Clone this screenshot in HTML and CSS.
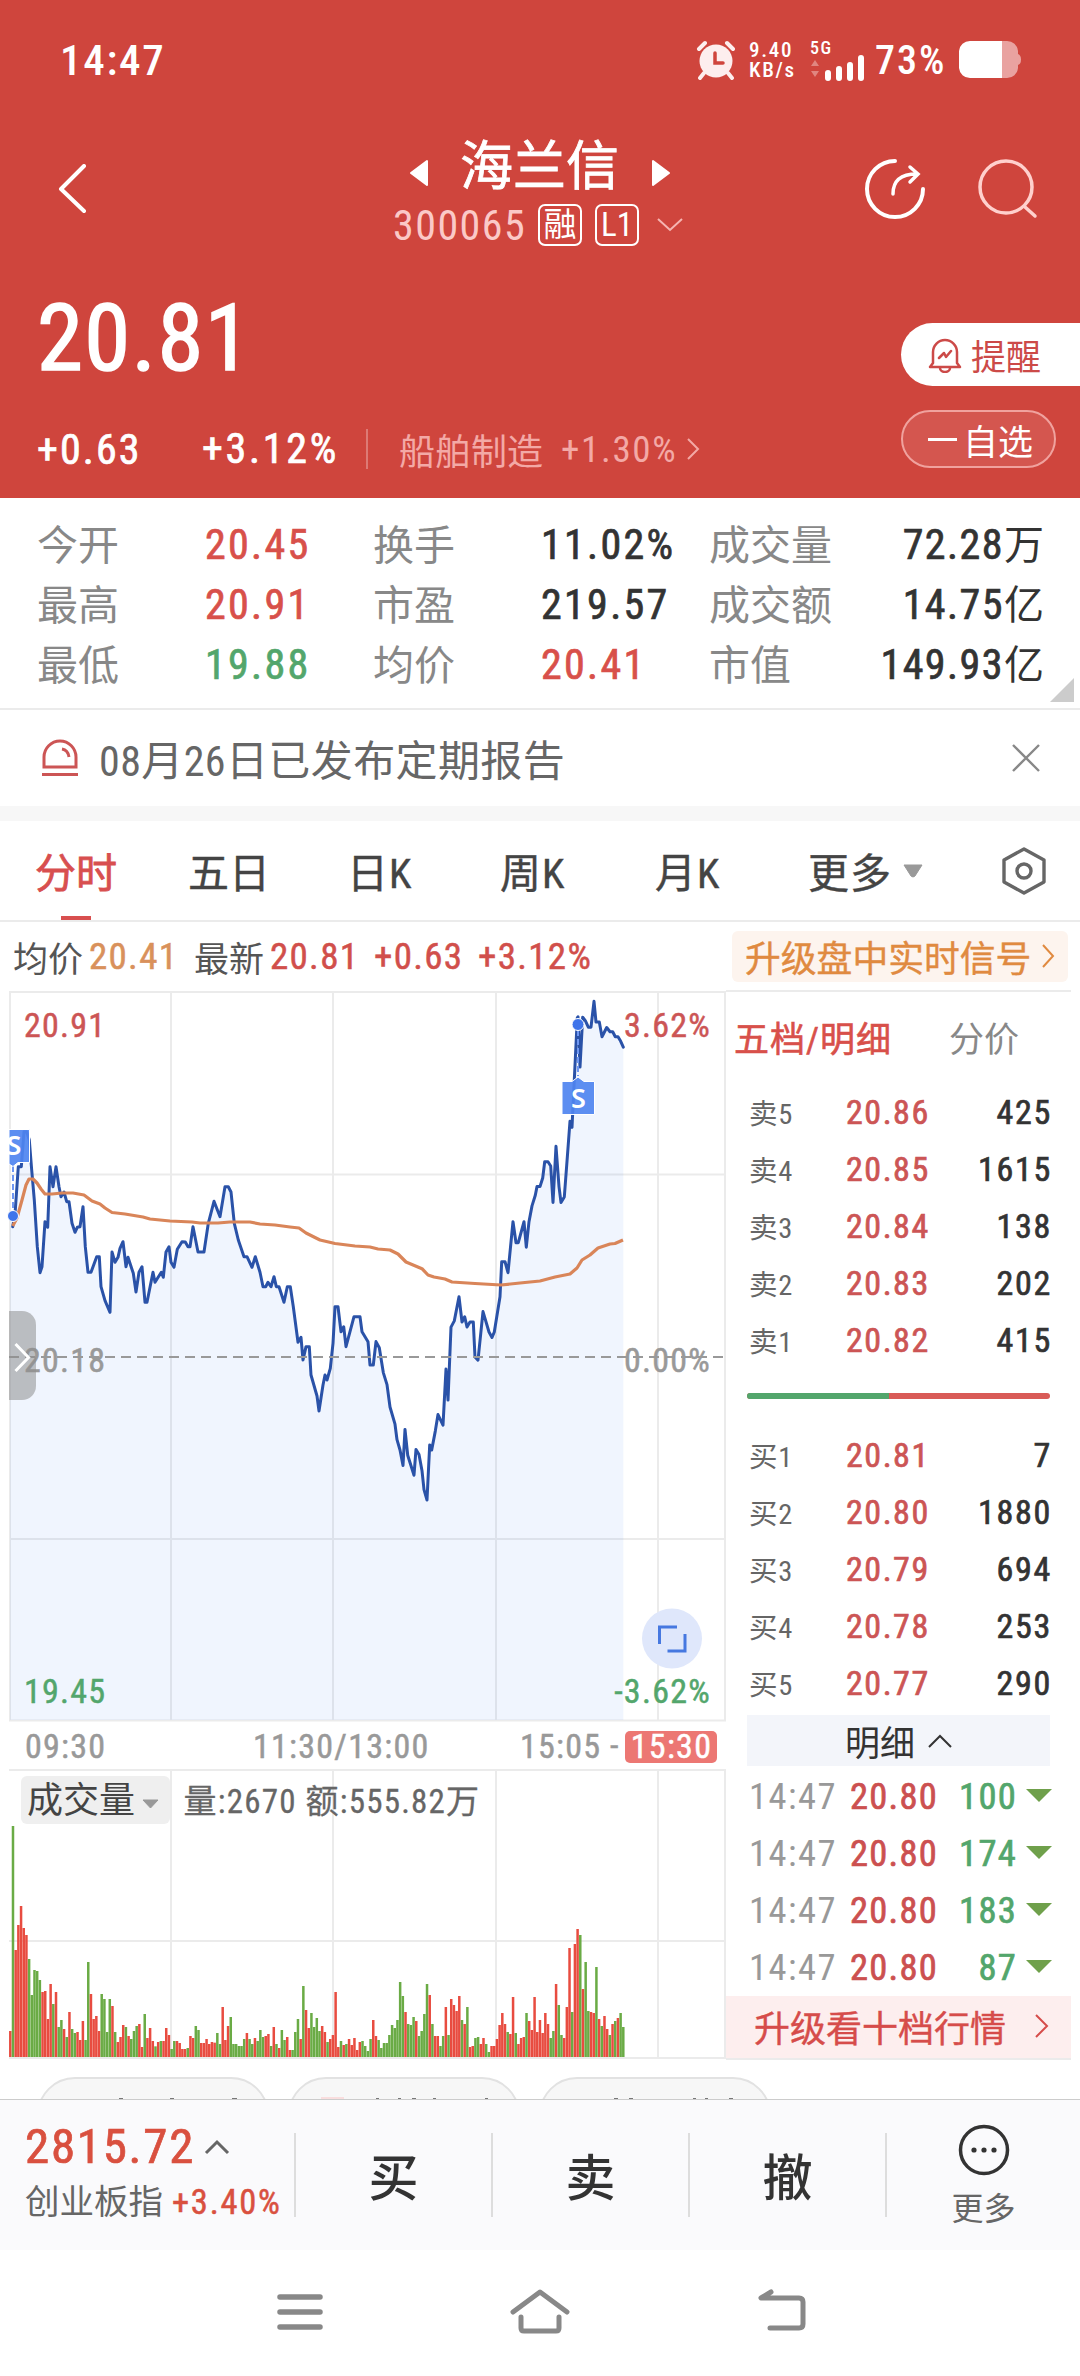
FILE: index.html
```
<!DOCTYPE html>
<html lang="zh-CN">
<head>
<meta charset="utf-8">
<title>海兰信 300065</title>
<link rel="stylesheet" href="styles.css">
</head>
<body>
<header class="hero">
  <div class="status">
    <span class="clock">14:47</span>
    <svg class="alarm" width="40" height="40" viewBox="0 0 40 40" fill="none" stroke="#fdeeee" stroke-linecap="round"><circle cx="20" cy="21" r="16.5" fill="#fdeeee" stroke="none"/><path d="M3 9l6-6M37 9l-6-6M8 33l-4 5M32 33l4 5" stroke-width="4"/><path d="M19 13v10h8" stroke="#cf453d" stroke-width="3.5"/></svg>
    <span class="speed">9.40<br>KB/s</span>
    <span class="signal"><span class="net">5G</span><svg width="56" height="28" viewBox="0 0 56 28"><path d="M1 12l4-6 4 6zM1 17l4 6 4-6z" fill="#e08680"/><path d="M18 24v-5M29 24v-9M40 24v-13M51 24V4" stroke="#fff" stroke-width="6" stroke-linecap="round"/></svg></span>
    <span class="percent">73%</span>
    <svg class="battery" width="64" height="38" viewBox="0 0 64 38"><path d="M11 0h37a11 11 0 0 1 11 10v3q3 1 3 5.500t-3 5.500v3a11 11 0 0 1-11 10h-37z" fill="#e9a2a0"/><path d="M43 0v37H11a11 11 0 0 1-11-10V10A11 11 0 0 1 11 0z" fill="#fff"/></svg>
  </div>
  <div class="titlebar">
    <svg class="back" width="30" height="50" viewBox="0 0 30 50"><path d="M27 2L4 25l23 22" fill="none" stroke="#fff" stroke-width="4" stroke-linecap="round" stroke-linejoin="round"/></svg>
    <div class="stock">
      <div class="name"><svg width="18" height="28" viewBox="0 0 18 28"><path d="M17 2v24L1 14z" fill="#fff" stroke="#fff" stroke-width="2" stroke-linejoin="round"/></svg><h1>海兰信</h1><svg width="18" height="28" viewBox="0 0 18 28"><path d="M1 2v24l16-12z" fill="#fff" stroke="#fff" stroke-width="2" stroke-linejoin="round"/></svg></div>
      <div class="code"><span class="num">300065</span><span class="tag">融</span><span class="tag l1">L1</span><svg width="26" height="16" viewBox="0 0 26 16"><path d="M1 2l12 11L25 2" fill="none" stroke="#f6b5b2" stroke-width="2"/></svg></div>
    </div>
    <svg class="share" width="62" height="62" viewBox="0 0 62 62" fill="none" stroke="#fff" stroke-width="4" stroke-linecap="round"><path d="M31 3a28 28 0 1 0 28 28"/><path d="M29 36c0-13 7-20 24-20M46 9l8 7-8 8" stroke-width="3.500"/></svg>
    <svg class="search" width="62" height="62" viewBox="0 0 62 62" fill="none" stroke="#ffd0cd" stroke-width="3.500" stroke-linecap="round"><circle cx="29" cy="29" r="26"/><path d="M48 49l10 9"/></svg>
  </div>
  <div class="price">
    <div class="last">20.81</div>
    <div class="change"><b class="diff">+0.63</b><b class="pct">+3.12%</b><span class="industry">船舶制造</span><span class="indpct">+1.30%</span><svg width="13" height="24" viewBox="0 0 13 24"><path d="M1 2l10 10L1 22" fill="none" stroke="#f3a9a6" stroke-width="2"/></svg></div>
  </div>
  <div class="actions">
    <a class="remind"><svg width="34" height="36" viewBox="0 0 34 36" fill="none" stroke="#cc4a48" stroke-width="2.500" stroke-linejoin="round" stroke-linecap="round"><path d="M5 26V15a12 12 0 0 1 24 0v11l3 4H2z"/><path d="M12 31a5 4 0 0 0 10 0M11 21l5-5 2 4 5-6"/></svg>提醒</a>
    <a class="watch"><i></i>自选</a>
  </div>
</header>

<section class="stats">
  <span>今开</span><b class="up">20.45</b><span>换手</span><b>11.02%</b><span>成交量</span><b>72.28<small>万</small></b>
  <span>最高</span><b class="up">20.91</b><span>市盈</span><b>219.57</b><span>成交额</span><b>14.75<small>亿</small></b>
  <span>最低</span><b class="down">19.88</b><span>均价</span><b class="up">20.41</b><span>市值</span><b>149.93<small>亿</small></b>
  <svg class="corner" width="24" height="24" viewBox="0 0 24 24"><path d="M24 0v24H0z" fill="#ccc"/></svg>
</section>

<section class="notice">
  <svg width="36" height="38" viewBox="0 0 36 38" fill="none" stroke="#cc5555" stroke-width="3"><path d="M2 28V18a16 16 0 0 1 32 0v10zM0 35.500h36M20 10q6 1 7 8"/></svg>
  <span>08月26日已发布定期报告</span>
  <svg width="28" height="28" viewBox="0 0 28 28"><path d="M1 1l26 26M27 1L1 27" stroke="#888" stroke-width="2.400"/></svg>
</section>

<nav class="tabs">
  <a class="on">分时</a><a>五日</a><a>日K</a><a>周K</a><a>月K</a><a>更多</a>
  <svg class="caret" width="22" height="14" viewBox="0 0 22 14"><path d="M2 1h18l-7 11q-2 2-4 0z" fill="#999" stroke="#999" stroke-linejoin="round"/></svg>
  <svg class="gear" width="46" height="50" viewBox="0 0 46 50" fill="none" stroke="#666" stroke-width="3.400" stroke-linejoin="round"><path d="M23 3l20 11v22L23 47 3 36V14z"/><circle cx="23" cy="25" r="7"/></svg>
</nav>

<div class="summary">
  <span>均价</span><b class="avg">20.41</b><span>最新</span><b>20.81</b><b>+0.63</b><b>+3.12%</b>
  <a class="upgrade">升级盘中实时信号<svg width="14" height="24" viewBox="0 0 14 24"><path d="M2 1l10 11L2 23" fill="none" stroke="#e08a40" stroke-width="2"/></svg></a>
</div>

<main class="board">
  <svg class="chart" width="726" height="1070" viewBox="0 990 726 1070">
    <g class="grid">
      <path d="M9 992H726M9 1174.500H726M9 1539H726M9 1720.500H726M9 1770H726M9 1941H726M9 2058H726"/>
      <path d="M10 991V1721M171 991V1721M333 991V1721M496 991V1721M658 991V1721M725 991V1721M171 1770V2058M333 1770V2058M496 1770V2058M658 1770V2058M725 1770V2058"/>
    </g>
    <path id="area" class="area"/>
    <polyline id="price" class="line" points="12.7,1226.7 15.3,1210 18.3,1166.7 21.3,1166.7 24,1131.7 26.700,1131.7 29.3,1140 31.7,1170 34.3,1200 37.3,1246.7 40,1272.7 42,1266.7 45,1221.7 47.7,1227.3 50,1166.7 53,1186.7 56,1166.7 59,1186.7 61,1196.7 64,1192 66.7,1201.7 69,1201.7 72,1223.3 75,1232.3 77.3,1227.3 80,1226.7 83,1206.7 85.3,1246.7 88,1272.3 91,1272.3 96.7,1256.7 99.3,1256.7 101,1286.7 105,1300.7 110,1312.3 112,1252 115,1262.3 118,1257.3 120,1248.3 123,1241.7 126,1266.7 128,1257.3 133.3,1273.3 136,1292 139,1272.3 142,1266.7 145,1302.3 147,1302.3 153,1272.3 155,1282.3 161.3,1272.3 163.3,1277.3 166,1252 169,1246.7 171,1262.3 174,1267.3 177.3,1249.3 182,1241.7 185.3,1242 188,1246.7 190,1246.7 193,1226.7 198,1252 204,1252 208.3,1223.3 214,1201.3 220,1216.7 225,1186.7 228.3,1186.7 231,1192 234.3,1223.3 238.3,1240 244,1256.7 247,1256.7 252,1267.3 255.3,1256.7 260,1272.3 263,1286.7 265.7,1286.7 268,1282.3 271,1286.7 274,1276.7 276.3,1286.7 279,1286.7 284,1302.3 287.3,1286.7 290.3,1286.7 293.3,1306.7 298,1342.3 301,1337.3 303,1360 306,1346.7 309.3,1346.7 311,1375 317,1396 319,1411 323,1385 325,1375 327,1380 330.3,1368.3 333,1343.3 335,1306.7 338,1306.7 341,1331.7 343.7,1326.7 346,1346.7 354,1316.7 360,1316.7 362,1331.7 368,1341.7 370,1365 373.3,1365 376,1341.6 379.3,1347.8 383.3,1372.6 387,1384.6 390,1407 395,1424.2 397,1439.7 400,1450 403,1465.5 405,1429.4 407.7,1455.2 414,1475.2 416,1449.4 419,1454.5 422,1470.7 424,1489.6 427,1500 429.7,1444.9 431.7,1450 435.3,1431.1 438,1414.6 443,1425.2 446,1369.1 448,1400.1 451,1327.1 454.3,1320.9 459,1296.8 462,1322 464.7,1316.8 467,1327 470,1322 473.3,1322 475,1357 478,1360.2 483,1311.6 489,1332 492,1337.4 494.3,1332 500,1296.8 501.7,1261.7 505,1261.7 508,1272.7 513,1221.7 516,1242.7 518.3,1242.7 524,1221.7 526.3,1247.2 529,1221.7 532,1205.9 535.3,1195.2 537,1186.6 540,1186.6 542.7,1178 544.7,1161.8 548,1161.8 550.7,1166 553,1202.5 556,1146.3 559,1186.6 561,1202.5 564.3,1197 567.3,1157.3 570,1121.2 572,1127.4 574.3,1079.9 577.3,1017.9 578,1016.8 580,1067.1 582.7,1017.2 585.3,1020.6 588.3,1027.2 591,1027.2 594,1001.3 596,1022 599.3,1022 602,1036.8 606.7,1027.5 610,1031.7 612.7,1031.7 615.3,1036.8 618,1036.8 620.7,1041.3 623.3,1047.1"/>
    <polyline class="mean" points="12.7,1226 17,1218 22,1200 26,1185 29,1179 33,1179 37,1183 41,1189 45,1194 52,1194 62,1193 73,1193 84,1195 92,1201 100,1204 105,1208 112,1212.5 125,1214 143,1217 150,1219 170,1221 192,1222 200,1223 218,1223 230,1222 250,1222 260,1224 275,1225 290,1227 299,1228 306,1233 320,1240 335,1243.5 355,1246 370,1247 378,1249 390,1250 398,1254 406,1262 422,1268.7 428,1275 434,1277 445,1279 452,1282 475,1283.5 501,1285 520,1283 540,1281 555,1277 570,1274 577,1268 582,1260 590,1255 598,1248 610,1244 615,1243.5 623,1240"/>
    <g class="marker">
      <path d="M13 1166V1214" class="lead"/><circle cx="13" cy="1216" r="5.500"/>
      <path d="M9 1129.500H29.500V1162.500H18L13 1166.500L9 1164Z" class="flag"/><text x="14" y="1155" text-anchor="middle">S</text>
      <path d="M578 1030V1076" class="lead"/><circle cx="578" cy="1024.500" r="6"/>
      <path d="M562 1081.500H572L578 1077L584 1081.500H594.500V1114.500H562Z" class="flag"/><text x="578.500" y="1108" text-anchor="middle">S</text>
      <path d="M0 1120h9v60H0z" fill="#fff" stroke="none"/>
    </g>
    <path d="M9 1357H726" class="zero"/>
    <text x="24" y="1037" class="up">20.91</text><text x="711" y="1037" class="up end">3.62%</text>
    <text x="24" y="1372">20.18</text><text x="711" y="1372" class="end">0.00%</text>
    <circle cx="672" cy="1638.500" r="30" fill="#dfe7fb"/><path d="M659.500 1644V1627H677M667.500 1651H685V1634" fill="none" stroke="#4678e0" stroke-width="3"/>
    <text x="24" y="1703" class="down">19.45</text><text x="711" y="1703" class="down end">-3.62%</text>
    <path d="M9 1311h13a14 14 0 0 1 14 14v61a14 14 0 0 1-14 14H9z" fill="#8e8e8e" opacity=".55"/><path d="M15.500 1344L28.500 1357.500 15.500 1371" fill="none" stroke="#fff" stroke-width="3"/>
    <text x="25" y="1758">09:30</text><text x="253" y="1758">11:30/13:00</text><text x="520" y="1758">15:05</text><text x="610" y="1757">-</text>
    <rect x="625" y="1731" width="92" height="32" rx="5" fill="#ec7773"/><text x="671.500" y="1758" class="mid">15:30</text>
    <rect x="21" y="1776" width="149" height="48" rx="6" fill="#efefef"/><text x="27" y="1813" class="vol">成交量</text><path d="M143 1800h15l-7.500 8z" fill="#999" stroke="#999" stroke-linejoin="round"/>
    <text x="183.500" y="1813" class="volinfo">量:2670 额:555.82万</text>
    <g id="bars"></g>
  </svg>

  <aside class="book">
    <div class="booktabs"><span class="on">五档/明细</span><span>分价</span></div>
    <div class="row"><span>卖5</span><b>20.86</b><em>425</em></div>
    <div class="row"><span>卖4</span><b>20.85</b><em>1615</em></div>
    <div class="row"><span>卖3</span><b>20.84</b><em>138</em></div>
    <div class="row"><span>卖2</span><b>20.83</b><em>202</em></div>
    <div class="row"><span>卖1</span><b>20.82</b><em>415</em></div>
    <div class="ratio"><i></i></div>
    <div class="row"><span>买1</span><b>20.81</b><em>7</em></div>
    <div class="row"><span>买2</span><b>20.80</b><em>1880</em></div>
    <div class="row"><span>买3</span><b>20.79</b><em>694</em></div>
    <div class="row"><span>买4</span><b>20.78</b><em>253</em></div>
    <div class="row"><span>买5</span><b>20.77</b><em>290</em></div>
    <div class="detail">明细<svg width="24" height="14" viewBox="0 0 24 14"><path d="M1 13L12 2l11 11" fill="none" stroke="#333" stroke-width="2"/></svg></div>
    <div class="tick"><span>14:47</span><b>20.80</b><em>100</em><i></i></div>
    <div class="tick"><span>14:47</span><b>20.80</b><em>174</em><i></i></div>
    <div class="tick"><span>14:47</span><b>20.80</b><em>183</em><i></i></div>
    <div class="tick"><span>14:47</span><b>20.80</b><em>87</em><i></i></div>
    <a class="ten">升级看十档行情<svg width="14" height="24" viewBox="0 0 14 24"><path d="M1 1l11 11L1 23" fill="none" stroke="#d64c4a" stroke-width="2"/></svg></a>
  </aside>
</main>

<div class="chips">
  <span><svg width="228" height="20" viewBox="0 0 228 20"><path d="M80 19.500h4M131 19.500h4M193 19.500h5" stroke="#777"/></svg></span>
  <span><svg width="228" height="20" viewBox="0 0 228 20"><path d="M31 19h23" stroke="#f9dede" stroke-width="2"/><path d="M86 19.500h3M108 19.500h3M122 19.500h4M143 19.500h3M195 19.500h3" stroke="#777"/></svg></span>
  <span><svg width="228" height="20" viewBox="0 0 228 20"><path d="M73 19.500h4M88 19.500h4M152 19.500h3M164 19.500h3M188 19.500h4" stroke="#777"/></svg></span>
</div>

<footer class="trade">
  <div class="index"><div><b>2815.72</b><svg width="26" height="16" viewBox="0 0 26 16"><path d="M2 14L13 3l11 11" fill="none" stroke="#666" stroke-width="3"/></svg></div><p>创业板指<b>+3.40%</b></p></div>
  <a>买</a><a>卖</a><a>撤</a>
  <div class="more"><svg width="52" height="52" viewBox="0 0 52 52"><circle cx="26" cy="26" r="23.500" fill="none" stroke="#333" stroke-width="3.500"/><g fill="#333"><circle cx="16" cy="26" r="2.600"/><circle cx="26" cy="26" r="2.600"/><circle cx="36" cy="26" r="2.600"/></g></svg><span>更多</span></div>
</footer>

<div class="system">
  <svg width="46" height="46" viewBox="0 0 46 46"><path d="M3 8h40M3 23h40M3 38h40" stroke="#888" stroke-width="5.500" stroke-linecap="round"/></svg>
  <svg width="60" height="46" viewBox="0 0 60 46" fill="none" stroke="#888" stroke-width="5" stroke-linecap="round" stroke-linejoin="round"><path d="M3 23L30 3l27 20M11 28v11q0 3 3 3h32q3 0 3-3V28"/></svg>
  <svg width="50" height="46" viewBox="0 0 50 46" fill="none" stroke="#888" stroke-width="5" stroke-linecap="round" stroke-linejoin="round"><path d="M14 3L4 9H42q4 0 4 4v22q0 4-4 4H13"/></svg>
</div>
<script src="chart.js"></script>
</body>
</html>
```
FILE: styles.css
```
* { box-sizing: border-box; }
body {
  margin: 0; width: 1080px; height: 2376px; overflow: hidden; background: #fff; color: #333;
  font-family: Roboto, "Noto Sans CJK SC", sans-serif; font-stretch: 75%; letter-spacing: .03em;
  display: flex; flex-direction: column;
}
b, em, i { font-style: normal; font-weight: 400; -webkit-text-stroke: .7px currentColor; }
svg { display: block; flex: none; }
.up { color: #d8504a; fill: #d8504a; }
.down { color: #53a66c; fill: #53a66c; }

.hero {
  height: 498px; flex: none; background: #cf453d; color: #fff;
  display: grid; grid-template: 120px 160px 218px / 880px 200px;
}
.status { grid-column: 1 / 3; display: flex; align-items: center; padding-left: 60px; }
.clock { font-size: 43px; font-weight: 500; width: 636px; letter-spacing: .04em; }
.speed { font-size: 21px; line-height: 20px; font-weight: 500; margin-left: 13px; width: 61px; letter-spacing: .08em; }
.signal { width: 65px; display: flex; flex-direction: column; padding-top: 1px; }
.signal svg { margin-top: -2px; }
.net { font-size: 18px; line-height: 16px; font-weight: 500; letter-spacing: .08em; }
.percent { font-size: 40px; font-weight: 500; width: 84px; letter-spacing: .05em; }
.titlebar { grid-column: 1 / 3; display: flex; align-items: center; padding-left: 57px; }
.back { margin-top: -22px; }
.stock { width: 400px; margin-left: 257px; display: flex; flex-direction: column; align-items: center; align-self: flex-start; }
.name { display: flex; align-items: center; gap: 32px; height: 78px; margin-top: 8px; margin-left: -8px; }
.name svg { margin-top: 11px; }
h1 { margin: 0; font-size: 53px; font-weight: 400; -webkit-text-stroke: .8px #fff; letter-spacing: 0; line-height: 78px; width: 160px; white-space: nowrap; }
.code { display: flex; align-items: center; height: 42px; font-size: 42px; color: #fbc9c7; margin: -2px 0 0 -12px; }
.num { width: 145px; letter-spacing: .035em; }
.tag { width: 44px; height: 42px; border: 2px solid #fff; border-radius: 7px; margin-right: 13px; color: #fff; font-size: 33px; line-height: 37px; text-align: center; letter-spacing: 0; }
.tag.l1 { margin-right: 18px; }
.share { margin: -22px 0 0 120px; }
.search { margin: -22px 0 0 51px; }
.price { padding-left: 37px; }
.last { font-size: 93px; line-height: 92px; margin-top: 13px; font-weight: 400; -webkit-text-stroke: 1.600px #fff; letter-spacing: .015em; }
.change { display: flex; align-items: center; height: 42px; margin-top: 43px; font-size: 42px; letter-spacing: .05em; }
.diff { width: 165px; }
.pct { width: 166px; border-right: 2px solid #dd7a75; line-height: 40px; letter-spacing: .065em; }
.industry { font-size: 36px; color: #f3a9a6; margin-left: 31px; letter-spacing: 0; width: 162px; }
.indpct { font-size: 37px; color: #f3a9a6; width: 126px; white-space: nowrap; letter-spacing: .045em; }
.actions { display: flex; flex-direction: column; align-items: flex-start; padding: 43px 0 0 21px; font-size: 35px; }
.remind { width: 179px; height: 63px; border-radius: 32px 0 0 32px; background: #fff; color: #cc4a48; display: flex; align-items: center; padding-left: 27px; gap: 9px; letter-spacing: 0; }
.watch { width: 155px; height: 58px; margin-top: 24px; border-radius: 29px; border: 2px solid #f0a29e; background: #d4564f; display: flex; align-items: center; padding-left: 25px; gap: 6px; letter-spacing: 0; }
.watch i { width: 29px; height: 3px; background: #fff; }

.stats {
  position: relative; height: 212px; flex: none; padding: 16px 36px 16px 37px; border-bottom: 2px solid #ebebeb;
  display: grid; grid-template: repeat(3, 60px) / 168px 168px 168px 168px 170px 1fr; align-items: center; font-size: 42px;
}
.stats span { color: #888; font-size: 41px; letter-spacing: 0; margin-top: -4px; }
.stats b { letter-spacing: .055em; }
.stats b:nth-of-type(3n) { text-align: right; letter-spacing: .035em; white-space: nowrap; margin-top: -4px; }
.stats small { font-size: 40px; font-weight: 400; letter-spacing: 0; -webkit-text-stroke: 0; }
.corner { position: absolute; right: 6px; bottom: 6px; }

.notice { height: 111px; flex: none; border-bottom: 15px solid #f7f7f7; display: flex; align-items: center; padding: 0 40px 0 42px; color: #666; font-size: 42px; }
.notice span { margin-left: 21px; flex: 1; letter-spacing: .4px; margin-top: -2px; }

.tabs { height: 101px; flex: none; border-bottom: 2px solid #ebebeb; display: grid; grid-template-columns: 153px 159px 153px 155px 153px 94px 99px 46px; padding-left: 35px; align-items: center; font-size: 41px; letter-spacing: 0; color: #444; }
.tabs a { height: 99px; line-height: 107px; -webkit-text-stroke: .4px currentColor; }
.tabs a:nth-child(n+3) { letter-spacing: 1px; }
.tabs .on { -webkit-text-stroke: .8px currentColor; color: #d84f4f; background: linear-gradient(#d84f4f, #d84f4f) 26px 95px / 30px 4px no-repeat; }

.summary { height: 68px; flex: none; display: flex; align-items: center; padding: 0 12px 0 13px; font-size: 37px; color: #d14f4b; }
.summary span { color: #555; font-size: 35px; letter-spacing: 0; width: 76px; }
.summary b { width: 104px; white-space: nowrap; letter-spacing: .035em; -webkit-text-stroke: .5px currentColor; }
.summary .avg { color: #d9915b; width: 105px; }
.upgrade { margin-left: auto; width: 336px; height: 51px; border-radius: 6px; background: #fdf4ee; color: #e08a40; display: flex; align-items: center; justify-content: space-between; padding: 0 13px; font-size: 35.800px; letter-spacing: 0; -webkit-text-stroke: .4px currentColor; }

.board { height: 1070px; flex: none; display: flex; }
.grid path { stroke: #ebebeb; stroke-width: 2; fill: none; }
.area { fill: rgba(70, 130, 240, .08); }
.line { fill: none; stroke: #2a52a8; stroke-width: 3; stroke-linejoin: round; stroke-linecap: round; }
.mean { fill: none; stroke: #d98559; stroke-width: 3.200; stroke-linejoin: round; }
.zero { stroke: #999; stroke-width: 2; stroke-dasharray: 10 6; }
.chart text { font-size: 34px; fill: #999; stroke: #999; stroke-width: .5px; letter-spacing: .037em; }
.chart text.up { fill: #cc5555; stroke: #cc5555; }
.chart text.down { fill: #53a66c; stroke: #53a66c; }
.chart .end { text-anchor: end; }
.chart text.mid { text-anchor: middle; fill: #fff; stroke: #fff; }
.chart text.vol { fill: #444; font-size: 36px; letter-spacing: 0; stroke: none; }
.chart text.volinfo { fill: #666; font-size: 33px; stroke: #666; stroke-width: .3px; }
.marker circle { fill: #3f74ea; stroke: #fff; stroke-width: 1; }
.marker .lead { stroke: #6f97f2; stroke-width: 2; stroke-dasharray: 6 3; }
.marker .flag { fill: #4f84f0; fill-opacity: .92; stroke: #fff; }
.chart .marker text { fill: #fff; stroke: none; font-family: "Noto Sans", sans-serif; font-size: 27px; font-weight: 600; letter-spacing: 0; }

.book { width: 345px; border-top: 2px solid #ebebeb; border-bottom: 2px solid #ebebeb; display: flex; flex-direction: column; padding-left: 21px; }
.booktabs { height: 91px; display: flex; align-items: center; padding-bottom: 2px; margin-left: -13px; font-size: 35px; letter-spacing: 0; color: #888; }
.booktabs .on { color: #d8504a; width: 215px; letter-spacing: 1px; -webkit-text-stroke: .6px currentColor; }
.row { height: 57px; width: 303px; display: grid; grid-template-columns: 99px 120px 1fr; align-items: center; font-size: 34px; }
.row span { font-size: 28.500px; color: #666; padding-left: 2px; letter-spacing: .03em; margin-top: -1px; }
.row b { color: #cc5555; letter-spacing: .045em; }
.row em { text-align: right; letter-spacing: .05em; margin-right: -2px; }
.ratio { width: 303px; height: 6px; margin: 25px 0 27px; border-radius: 3px; background: #d95b57; overflow: hidden; }
.ratio i { display: block; width: 47%; height: 6px; background: #53a66c; }
.detail { width: 303px; height: 51px; margin: 4px 0 2px; background: #f3f5fa; display: flex; align-items: center; justify-content: center; gap: 13px; font-size: 35px; letter-spacing: 0; }
.tick { height: 57px; width: 303px; display: grid; grid-template-columns: 101px 90px 77px 35px; align-items: center; font-size: 36.500px; padding-left: 2px; }
.tick span { color: #999; letter-spacing: .04em; }
.tick b { color: #cc5050; letter-spacing: .035em; }
.tick em { text-align: right; color: #53a66c; letter-spacing: .035em; }
.tick i { width: 26px; height: 13px; background: #6fa04b; clip-path: polygon(0 0, 100% 0, 50% 100%); margin: -2px 0 0 9px; }
.ten { flex: 1; margin: 0 0 0 -21px; padding: 0 22px 3px 28px; background: #fdeeee; color: #d64c4a; display: flex; align-items: center; justify-content: space-between; font-size: 36px; letter-spacing: 0; -webkit-text-stroke: .4px currentColor; }

.chips { height: 39px; flex: none; padding: 17px 0 0 37px; display: flex; gap: 19px; overflow: hidden; }
.chips span { width: 232px; height: 76px; border: 2px solid #e2e2e2; border-radius: 38px; background: #f7f7f7; }

.trade { height: 151px; flex: none; background: #fafafc; border-top: 1px solid #ccc; display: grid; grid-template-columns: 294px 197px 197px 197px 195px; align-items: center; }
.trade > a { font-size: 50px; font-weight: 500; text-align: center; height: 84px; line-height: 92px; border-left: 2px solid #ddd; letter-spacing: 0; }
.index { padding-left: 25px; white-space: nowrap; margin-top: -6px; }
.index div { display: flex; align-items: center; gap: 9px; font-size: 49px; line-height: 56px; color: #d9503f; }
.index div b { letter-spacing: .035em; }
.index p { margin: 4px 0 0; font-size: 34.500px; line-height: 46px; color: #666; letter-spacing: 0; }
.index p b { font-size: 34.500px; color: #d9503f; margin-left: 9px; letter-spacing: .05em; -webkit-text-stroke: .5px currentColor; }
.more { height: 84px; border-left: 2px solid #ddd; display: flex; flex-direction: column; align-items: center; justify-content: center; font-size: 32px; letter-spacing: 0; color: #666; gap: 10px; padding-top: 6px; }
.more span { line-height: 46px; }

.system { flex: 1; display: flex; padding: 39px 0 0 277px; }
.system svg:nth-child(2) { margin-left: 187px; }
.system svg:nth-child(3) { margin-left: 187px; }
```
FILE: chart.js
```
const volumes = [78,-693,321,396,453,387,366,-294,-186,-261,-258,-231,195,198,114,219,-159,195,-90,-111,84,-60,135,-84,-72,75,51,108,-51,-285,189,114,123,78,-189,-174,-75,-174,153,-75,45,60,96,-90,63,-54,-78,-93,99,30,-129,57,87,48,-32,45,-48,48,87,66,-24,-48,48,42,24,24,-27,63,57,-93,-81,42,42,54,39,45,43,-72,-39,150,51,93,-120,-39,-39,-33,-33,-54,72,-54,-39,57,-48,-81,-60,63,69,-33,90,-39,27,-81,-51,60,21,-21,-75,-114,54,-213,141,87,-132,-90,-117,-78,93,75,-45,54,66,195,30,-48,36,-39,54,36,57,21,45,-48,-33,-18,-54,
111,63,-51,-27,-42,-42,-66,-96,-87,-111,-225,-183,135,-99,-96,-120,108,-63,-78,-129,-219,186,-99,63,63,-33,-63,150,-66,174,156,138,183,-111,99,-150,30,33,-57,-60,39,57,-39,-15,33,33,54,96,132,99,-75,69,180,-72,39,57,60,-132,108,81,180,75,111,72,132,99,-57,-78,219,-156,-66,57,150,327,-135,339,384,-366,204,-285,-138,135,132,-270,114,-93,123,84,-66,99,-108,117,-132,-90];

const ns = "http://www.w3.org/2000/svg";
const first = 10.3, last = 623.3, base = 2057;
const step = (last - first) / (volumes.length - 1);
volumes.forEach((v, i) => {
  const bar = document.createElementNS(ns, "rect");
  const h = Math.abs(v) / 3;
  bar.setAttribute("x", Math.max(9, first + i * step - 1.25));
  bar.setAttribute("y", base - h);
  bar.setAttribute("width", 2.5);
  bar.setAttribute("height", h);
  bar.setAttribute("fill", v > 0 ? "#e84c40" : "#6aab45");
  document.getElementById("bars").appendChild(bar);
});

const pts = document.getElementById("price").getAttribute("points");
document.getElementById("area").setAttribute("d", "M10,1720 L10,1226 L" + pts.split(" ").join(" L") + " L623.3,1720 Z");
```
